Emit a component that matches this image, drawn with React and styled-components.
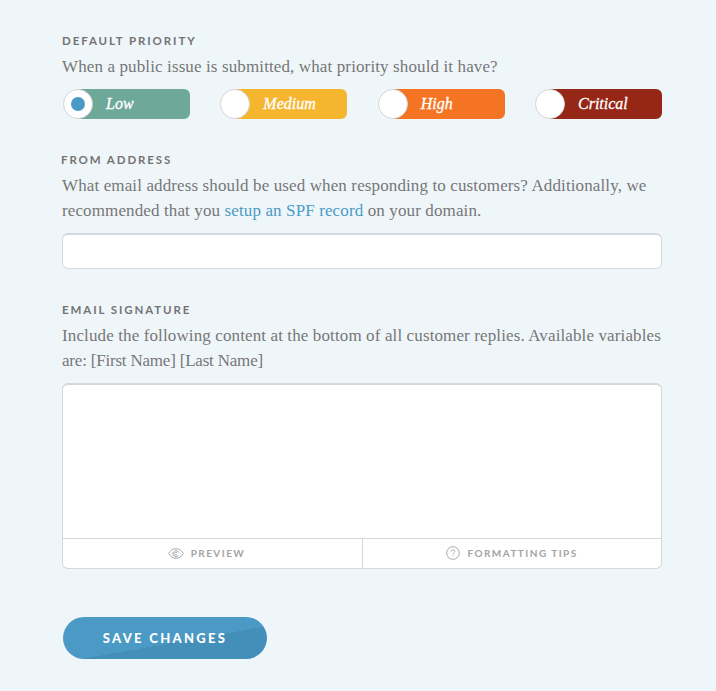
import React from 'react';
import styled, { createGlobalStyle } from 'styled-components';

const GlobalStyle = createGlobalStyle`
  html, body { margin: 0; padding: 0; background: #eff6fa; }
  * { box-sizing: border-box; }
`;

const priorities = [
  { name: 'Low', color: '#6ea899', selected: true },
  { name: 'Medium', color: '#f6b52f' },
  { name: 'High', color: '#f57423' },
  { name: 'Critical', color: '#962615' },
];

export default function App() {
  return (
    <React.Fragment>
      <GlobalStyle />
      <Page>
        <Section>
          <Label>Default Priority</Label>
          <Help>
            <HelpLine>When a public issue is submitted, what priority should it have?</HelpLine>
          </Help>
          <ToggleRow>
            {priorities.map((p) => (
              <Toggle key={p.name} $color={p.color}>
                <Knob>{p.selected && <Dot />}</Knob>
                <ToggleText>{p.name}</ToggleText>
              </Toggle>
            ))}
          </ToggleRow>
        </Section>

        <Section $top={32}>
          <Label $shift>From Address</Label>
          <Help>
            <HelpLine>What email address should be used when responding to customers? Additionally, we</HelpLine>
            <HelpLine>
              recommended that you <HelpLink href="#">setup an SPF record</HelpLink> on your domain.
            </HelpLine>
          </Help>
          <TextInput type="text" />
        </Section>

        <Section $top={32}>
          <Label>Email Signature</Label>
          <Help>
            <HelpLine>Include the following content at the bottom of all customer replies. Available variables</HelpLine>
            <HelpLine $tight>are: [First Name] [Last Name]</HelpLine>
          </Help>
          <EditorBox>
            <EditorArea />
            <EditorFooter>
              <FooterTab $offset={12}>
                <EyeIcon />
                Preview
              </FooterTab>
              <FooterTab>
                <HelpIcon />
                Formatting Tips
              </FooterTab>
            </EditorFooter>
          </EditorBox>
        </Section>

        <SaveButton>Save Changes</SaveButton>
      </Page>
    </React.Fragment>
  );
}

function EyeIcon() {
  return (
    <svg width="16" height="11" viewBox="0 0 16 11" fill="none" stroke="#a9a9a9" strokeWidth="1">
      <path d="M0.6 5.5C2.8 2.2 5.2 0.6 8 0.6S13.2 2.2 15.4 5.5C13.2 8.8 10.8 10.4 8 10.4S2.8 8.8 0.6 5.5Z" />
      <path d="M10.8 4.6A3 3 0 1 0 10.4 7.4" />
      <path d="M9 4.6A1.5 1.5 0 1 0 9 6.6" />
    </svg>
  );
}

function HelpIcon() {
  return (
    <svg width="14" height="14" viewBox="0 0 14 14" fill="none" stroke="#a9a9a9" strokeWidth="1">
      <circle cx="7" cy="7" r="6.3" />
      <path d="M5.2 5.5C5.2 4.4 6 3.8 7 3.8S8.8 4.4 8.8 5.4C8.8 6.6 7 6.8 7 8.3" />
      <path d="M7 9.6V10.5" />
    </svg>
  );
}

const Page = styled.div`
  width: 716px;
  height: 691px;
  overflow: hidden;
  padding: 32px 54px 0 62px;
  background: #eff6fa;
`;

const Section = styled.section`
  margin-top: ${(p) => p.$top || 0}px;
`;

const Label = styled.h4`
  margin: 0 0 0 ${(p) => (p.$shift ? '-1px' : '0')};
  height: 18px;
  font: 700 11.5px/18px Lato, sans-serif;
  letter-spacing: 1.9px;
  text-transform: uppercase;
  color: #737373;
`;

const Help = styled.p`
  margin: 0;
  padding-top: 4px;
  font: 400 17px/25px 'Liberation Serif', serif;
  letter-spacing: 0.12px;
  color: #777;
`;

const HelpLine = styled.span`
  display: block;
  white-space: nowrap;
  letter-spacing: ${(p) => (p.$tight ? '-0.2px' : 'inherit')};
`;

const HelpLink = styled.a`
  color: #4b9ac6;
  text-decoration: none;
`;

const ToggleRow = styled.div`
  display: flex;
  justify-content: space-between;
  margin-top: 10px;
  padding-left: 1px;
`;

const Toggle = styled.div`
  width: 127px;
  height: 30px;
  display: flex;
  align-items: center;
  gap: 13px;
  border-radius: 15px 6px 6px 15px;
  background: linear-gradient(to right, transparent 15px, ${(p) => p.$color} 15px);
`;

const Knob = styled.span`
  width: 30px;
  height: 30px;
  display: flex;
  align-items: center;
  justify-content: center;
  border-radius: 50%;
  background: #fff;
  border: 1px solid #d5d5d5;
`;

const Dot = styled.span`
  width: 14px;
  height: 14px;
  border-radius: 50%;
  background: #4b9ac6;
`;

const ToggleText = styled.span`
  font: italic 400 16px/30px 'Liberation Serif', serif;
  -webkit-text-stroke: 0.3px #fff;
  color: #fff;
`;

const TextInput = styled.input`
  display: block;
  width: 600px;
  height: 36px;
  margin-top: 10px;
  border: 1px solid #d5d8da;
  border-top-width: 2px;
  border-radius: 6px;
  background: #fff;
  outline: none;
`;

const EditorBox = styled.div`
  width: 600px;
  height: 186px;
  margin-top: 10px;
  display: flex;
  flex-direction: column;
  border: 1px solid #d5d8da;
  border-top-width: 2px;
  border-radius: 6px;
  background: #fff;
`;

const EditorArea = styled.div`
  flex: 1;
`;

const EditorFooter = styled.div`
  height: 30px;
  display: grid;
  grid-template-columns: 299px 1fr;
  border-top: 1px solid #d5d8da;
`;

const FooterTab = styled.div`
  display: flex;
  align-items: center;
  justify-content: center;
  gap: 7px;
  padding-right: ${(p) => p.$offset || 0}px;
  padding-bottom: 1px;
  font: 700 10px/1 Lato, sans-serif;
  letter-spacing: 1.45px;
  text-transform: uppercase;
  color: #a4a4a4;

  & + & {
    border-left: 1px solid #d5d8da;
  }
`;

const SaveButton = styled.button`
  display: block;
  width: 204px;
  height: 42px;
  margin: 48px 0 0 1px;
  padding: 0;
  border: 0;
  border-radius: 21px;
  background: linear-gradient(170deg, #4b9ac6 0 58%, #448fb9 58% 100%);
  font: 900 13px/42px Lato, sans-serif;
  letter-spacing: 2.3px;
  text-transform: uppercase;
  color: #fff;
`;
